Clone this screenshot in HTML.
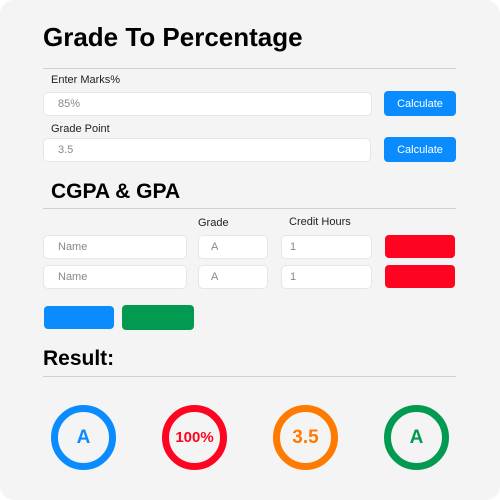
<!DOCTYPE html>
<html><head><style>
*{margin:0;padding:0;box-sizing:border-box}
body{width:500px;height:500px;background:#fff;position:relative;font-family:"Liberation Sans",sans-serif;overflow:hidden}
.card{position:absolute;left:0;top:0;width:500px;height:500px;background:#f4f4f4;border-radius:14px}
.a{position:absolute}
.t{font-weight:bold;color:#000}
.line{position:absolute;left:43px;width:413px;height:1px;background:#cfcfcf}
.lab{position:absolute;font-size:11px;color:#222}
.in{position:absolute;background:#fff;border:1px solid #e6e6e6;border-radius:5px;font-size:11px;color:#888;display:flex;align-items:center}
.btn{position:absolute;background:#0a8cff;color:#fff;border-radius:4px;font-size:11px;display:flex;align-items:center;justify-content:center}
.red{position:absolute;background:#ff0420;border-radius:4px}
.c{position:absolute;width:65px;height:65px;border-radius:50%;border:7px solid;display:flex;align-items:center;justify-content:center;font-weight:bold;top:405px}
</style></head><body>
<div class="card"></div>
<div class="a t" style="left:43px;top:22px;font-size:26px">Grade To Percentage</div>
<div class="line" style="top:68px"></div>
<div class="lab" style="left:51px;top:74px">Enter Marks%</div>
<div class="in" style="left:43px;top:92px;width:329px;height:24px;padding-left:14px">85%</div>
<div class="btn" style="left:384px;top:91px;width:72px;height:25px">Calculate</div>
<div class="lab" style="left:51px;top:123px">Grade Point</div>
<div class="in" style="left:43px;top:138px;width:328px;height:24px;padding-left:14px">3.5</div>
<div class="btn" style="left:384px;top:137px;width:72px;height:25px">Calculate</div>
<div class="a t" style="left:51px;top:180px;font-size:21px">CGPA &amp; GPA</div>
<div class="line" style="top:208px"></div>
<div class="lab" style="left:198px;top:217px">Grade</div>
<div class="lab" style="left:289px;top:216px">Credit Hours</div>
<div class="in" style="left:43px;top:235px;width:144px;height:24px;padding-left:14px">Name</div>
<div class="in" style="left:198px;top:235px;width:70px;height:24px;padding-left:12px">A</div>
<div class="in" style="left:281px;top:235px;width:91px;height:24px;padding-left:8px">1</div>
<div class="red" style="left:385px;top:235px;width:70px;height:23px"></div>
<div class="in" style="left:43px;top:265px;width:144px;height:24px;padding-left:14px">Name</div>
<div class="in" style="left:198px;top:265px;width:70px;height:24px;padding-left:12px">A</div>
<div class="in" style="left:281px;top:265px;width:91px;height:24px;padding-left:8px">1</div>
<div class="red" style="left:385px;top:265px;width:70px;height:23px"></div>
<div class="red" style="left:44px;top:306px;width:70px;height:23px;background:#0a8cff"></div>
<div class="red" style="left:122px;top:305px;width:72px;height:25px;background:#029a50"></div>
<div class="a t" style="left:43px;top:347px;font-size:21px">Result:</div>
<div class="line" style="top:376px"></div>
<div class="c" style="left:51px;border-color:#0a8cff;color:#0a8cff;font-size:19px">A</div>
<div class="c" style="left:162px;border-color:#ff0420;color:#ff0420;font-size:15px">100%</div>
<div class="c" style="left:273px;border-color:#ff7a00;color:#ff7a00;font-size:19px">3.5</div>
<div class="c" style="left:384px;border-color:#029a50;color:#029a50;font-size:19px">A</div>
</body></html>
